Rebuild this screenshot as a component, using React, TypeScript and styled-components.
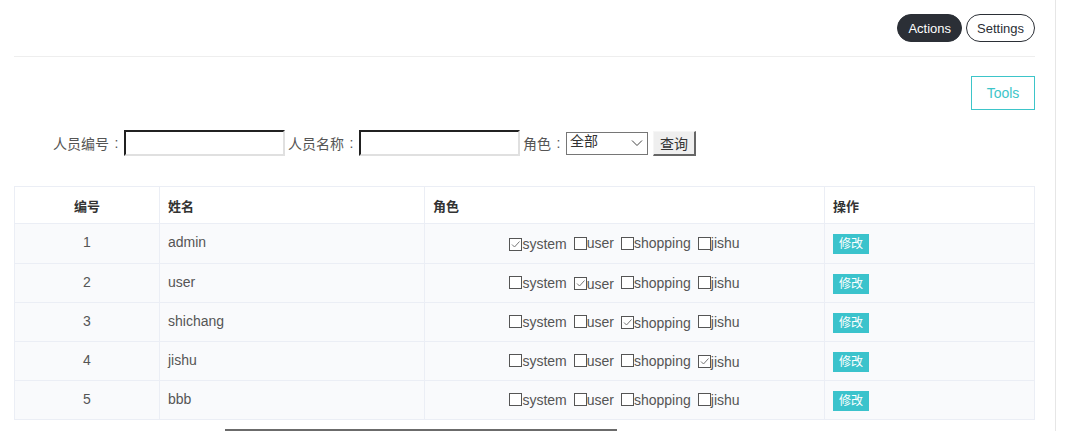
import React from 'react';
import styled, { createGlobalStyle } from 'styled-components';

const GlobalStyle = createGlobalStyle`
  html, body {
    margin: 0;
    padding: 0;
    background: #fff;
    font-family: "Liberation Sans", "Noto Sans CJK SC", sans-serif;
    font-size: 14px;
    color: #555;
    overflow: hidden;
  }
`;

interface IUser {
  id: number,
  name: string,
  roles: string[]
}

const ROLES = ['system', 'user', 'shopping', 'jishu'];

const users: IUser[] = [
  { id: 1, name: 'admin', roles: ['system'] },
  { id: 2, name: 'user', roles: ['user'] },
  { id: 3, name: 'shichang', roles: ['shopping'] },
  { id: 4, name: 'jishu', roles: ['jishu'] },
  { id: 5, name: 'bbb', roles: [] },
];

const Check = ({ checked }: { checked: boolean }) => (
  <CheckBox>
    {checked && (
      <svg width="11" height="11" viewBox="0 0 11 11">
        <path d="M2 5.5 L4.5 8 L9.5 2.5" fill="none" stroke="#777" strokeWidth="1" />
      </svg>
    )}
  </CheckBox>
);

const App = () => {
  return (
    <Page>
      <GlobalStyle />
      <TopBar>
        <PillButton dark>Actions</PillButton>
        <PillButton>Settings</PillButton>
      </TopBar>
      <ToolsRow>
        <ToolsButton>Tools</ToolsButton>
      </ToolsRow>
      <SearchForm>
        <Label>人员编号</Label>
        <Colon>:</Colon>
        <TextInput />
        <Label>人员名称</Label>
        <Colon>:</Colon>
        <TextInput />
        <Label>角色</Label>
        <Colon>:</Colon>
        <SelectBox>
          <span>全部</span>
          <svg width="12" height="8" viewBox="0 0 12 8">
            <path d="M1 1.5 L6 6.5 L11 1.5" fill="none" stroke="#444" strokeWidth="1" />
          </svg>
        </SelectBox>
        <QueryButton>查询</QueryButton>
      </SearchForm>
      <Table>
        <colgroup>
          <col style={{ width: 145 }} />
          <col style={{ width: 265 }} />
          <col style={{ width: 400 }} />
          <col />
        </colgroup>
        <thead>
          <tr>
            <Th center>编号</Th>
            <Th>姓名</Th>
            <Th>角色</Th>
            <Th>操作</Th>
          </tr>
        </thead>
        <tbody>
          {users.map(u => (
            <tr key={u.id}>
              <Td center>{u.id}</Td>
              <Td>{u.name}</Td>
              <Td center>
                {ROLES.map(r => (
                  <RoleLabel key={r}>
                    <Check checked={u.roles.includes(r)} />
                    {r}
                  </RoleLabel>
                ))}
              </Td>
              <Td>
                <EditButton>修改</EditButton>
              </Td>
            </tr>
          ))}
        </tbody>
      </Table>
      <BottomBar />
    </Page>
  );
};

export default App;

const Page = styled.div`
  width: 1021px;
  height: 431px;
  padding: 0 20px 0 14px;
  border-right: 1px solid #e6e6e6;
  box-sizing: content-box;
`;

const TopBar = styled.div`
  display: flex;
  justify-content: flex-end;
  align-items: center;
  gap: 4px;
  height: 57px;
  border-bottom: 1px solid #eeeeee;
  box-sizing: border-box;
`;

const PillButton = styled.button<{ dark?: boolean }>`
  height: 28px;
  padding: 0 10px;
  border-radius: 14px;
  font-family: "Liberation Sans", sans-serif;
  font-size: 13px;
  border: 1px solid #2b2f36;
  background: ${props => props.dark ? '#2b2f36' : '#fff'};
  color: ${props => props.dark ? '#fff' : '#2b2f36'};
`;

const ToolsRow = styled.div`
  display: flex;
  justify-content: flex-end;
  padding-top: 19px;
`;

const ToolsButton = styled.button`
  width: 64px;
  height: 34px;
  border: 1px solid #3dc5c9;
  background: #fff;
  color: #3dc5c9;
  font-family: "Liberation Sans", sans-serif;
  font-size: 14px;
`;

const SearchForm = styled.div`
  display: flex;
  align-items: center;
  padding: 20px 0 0 39px;
  height: 26px;
`;

const Label = styled.span`
  font-size: 14px;
  color: #555;
`;

const Colon = styled.span`
  display: inline-block;
  width: 15px;
  text-align: center;
  font-size: 14px;
  color: #555;
`;

const TextInput = styled.input`
  width: 161px;
  height: 26px;
  box-sizing: border-box;
  border: 2px inset #e0e0e0;
  border-top-color: #767676;
  border-left-color: #767676;
  margin-right: 3px;
  padding: 0;
`;

const SelectBox = styled.div`
  display: flex;
  align-items: center;
  justify-content: space-between;
  width: 82px;
  height: 23px;
  box-sizing: border-box;
  border: 1px solid #767676;
  padding: 0 4px 0 3px;
  font-size: 14px;
  color: #333;
  span {
    position: relative;
    top: -3px;
  }
`;

const QueryButton = styled.button`
  width: 43px;
  height: 25px;
  margin-left: 5px;
  box-sizing: border-box;
  border: 1px solid #777;
  border-top-color: #f6f6f6;
  border-left-color: #f6f6f6;
  border-right: 2px solid #666;
  border-bottom: 2px solid #666;
  background: #efefef;
  font-family: "Liberation Sans", "Noto Sans CJK SC", sans-serif;
  font-size: 14px;
  color: #333;
  padding: 0;
`;

const Table = styled.table`
  margin-top: 30px;
  width: 1021px;
  border-collapse: collapse;
  table-layout: fixed;
  tbody tr {
    background: #f9fafc;
  }
`;

const Th = styled.th<{ center?: boolean }>`
  height: 37px;
  padding: 0 8px;
  border: 1px solid #ebeef5;
  text-align: ${props => props.center ? 'center' : 'left'};
  font-size: 13px;
  font-weight: bold;
  color: #333;
  box-sizing: border-box;
`;

const Td = styled.td<{ center?: boolean }>`
  height: 39px;
  padding: 0 8px 3px;
  border: 1px solid #ebeef5;
  text-align: ${props => props.center ? 'center' : 'left'};
  font-size: 14px;
  color: #555;
  box-sizing: border-box;
  tr:first-child > & {
    height: 40px;
  }
`;

const RoleLabel = styled.span`
  display: inline-flex;
  align-items: center;
  margin-right: 7px;
  font-size: 14px;
  color: #555;
  position: relative;
  top: 2px;
  &:last-child {
    margin-right: 0;
  }
`;

const CheckBox = styled.span`
  display: inline-flex;
  align-items: center;
  justify-content: center;
  width: 13px;
  height: 13px;
  box-sizing: border-box;
  border: 1px solid #555;
  background: #fff;
`;

const EditButton = styled.span`
  display: inline-block;
  width: 36px;
  height: 20px;
  line-height: 20px;
  text-align: center;
  background: #3bc3cc;
  color: #fff;
  font-size: 12px;
  position: relative;
  top: 2px;
`;

const BottomBar = styled.div`
  margin: 9px 0 0 211px;
  width: 392px;
  height: 10px;
  border-top: 2px solid #6b6b6b;
`;
